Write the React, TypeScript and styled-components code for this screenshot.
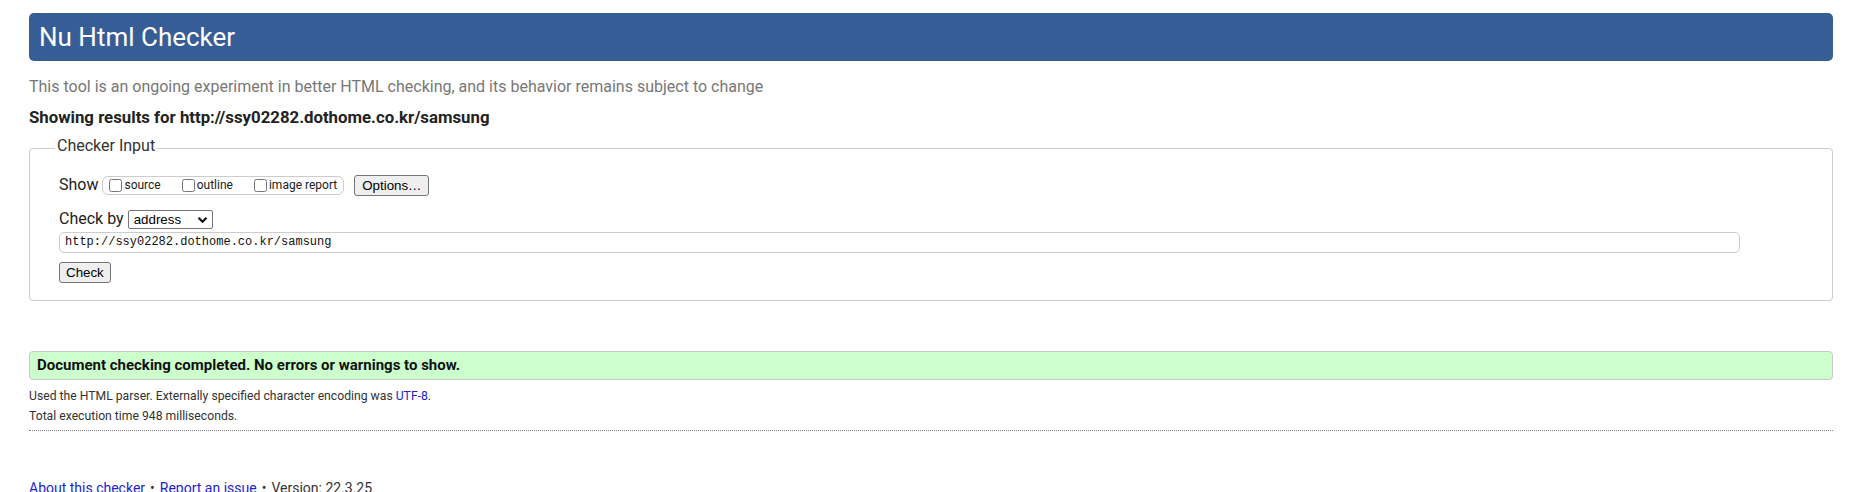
import * as React from 'react';
import styled, { createGlobalStyle } from 'styled-components';

const GlobalStyle = createGlobalStyle`
    body {
        margin: 0;
        background: #fff;
        color: #222;
        font-family: Roboto, "Liberation Sans", Arial, sans-serif;
    }
`;

const options = ['source', 'outline', 'image report'];

export default function App() {
    return (
        <>
            <GlobalStyle />
            <Page>
                <Header>Nu Html Checker</Header>
                <Intro>
                    This tool is an ongoing experiment in better HTML checking, and its behavior remains subject to change
                </Intro>
                <Results>Showing results for http://ssy02282.dothome.co.kr/samsung</Results>
                <form onSubmit={e => e.preventDefault()}>
                    <Fieldset>
                        <Legend>Checker Input</Legend>
                        <Row>
                            <Label>Show</Label>
                            <CheckGroup>
                                {options.map(name => (
                                    <CheckLabel key={name}>
                                        <input type="checkbox" />
                                        {name}
                                    </CheckLabel>
                                ))}
                            </CheckGroup>
                            <Button type="button" $pad={7}>Options…</Button>
                        </Row>
                        <Row $top={13} $align="baseline">
                            <Label>Check by</Label>
                            <SelectWrap>
                                <Select defaultValue="address">
                                    <option value="address">address</option>
                                    <option value="file">file upload</option>
                                    <option value="text">text input</option>
                                </Select>
                                <Chevron width="11" height="8" viewBox="0 0 11 8">
                                    <path d="M1.5 1.8 L5.5 5.8 L9.5 1.8" fill="none" stroke="#111" strokeWidth="2.2" />
                                </Chevron>
                            </SelectWrap>
                        </Row>
                        <Row $top={3}>
                            <UrlInput type="url" defaultValue="http://ssy02282.dothome.co.kr/samsung" />
                        </Row>
                        <Row $top={9}>
                            <Button type="submit" $pad={6}>Check</Button>
                        </Row>
                    </Fieldset>
                </form>
                <Success>Document checking completed. No errors or warnings to show.</Success>
                <Details>
                    <p>Used the HTML parser. Externally specified character encoding was <Link href="#">UTF-8</Link>.</p>
                    <p>Total execution time 948 milliseconds.</p>
                </Details>
                <Footer>
                    <Link href="#">About this checker</Link>
                    <Dot>•</Dot>
                    <Link href="#">Report an issue</Link>
                    <Dot>•</Dot>
                    Version: 22.3.25
                </Footer>
            </Page>
        </>
    );
}

const Page = styled.div`
    padding: 13px 22px 0 29px;
`;

const Header = styled.h1`
    margin: 0;
    height: 48px;
    padding-left: 10px;
    background: #365d95;
    border-radius: 5px;
    color: #fff;
    font-size: 26px;
    font-weight: 400;
    line-height: 48px;
`;

const Intro = styled.p`
    margin: 16px 0 0;
    color: #777;
    font-size: 16px;
    line-height: 20px;
`;

const Results = styled.p`
    margin: 10px 0 0;
    color: #222;
    font-size: 16.8px;
    font-weight: 700;
    line-height: 20px;
`;

const Fieldset = styled.fieldset`
    margin: 10px 0 0;
    padding: 15px 29px 17px 29px;
    border: 1px solid #ccc;
    border-radius: 4px;
    min-width: 0;
`;

const Legend = styled.legend`
    margin-left: -4px;
    padding: 0 2px 4px;
    color: #333;
    font-size: 16px;
    line-height: 18.75px;
`;

const Row = styled.div<{ $top?: number; $align?: string }>`
    display: flex;
    align-items: ${p => p.$align || 'center'};
    margin-top: ${p => p.$top || 0}px;
`;

const Label = styled.span`
    margin-right: 4px;
    color: #222;
    font-size: 16px;
    line-height: 20px;
`;

const CheckGroup = styled.span`
    display: inline-flex;
    align-items: center;
    gap: 17px;
    height: 19px;
    box-sizing: border-box;
    padding: 0 6px 0 2px;
    border: 1px solid #ccc;
    border-radius: 6px;
`;

const CheckLabel = styled.label`
    display: inline-flex;
    align-items: center;
    color: #222;
    font-size: 12px;

    input {
        width: 13px;
        height: 13px;
        margin: 0 2px 0 4px;
    }
`;

const Button = styled.button<{ $pad: number }>`
    height: 21px;
    margin-left: 10px;
    padding: 0 ${p => p.$pad}px;
    background: #efefef;
    border: 1px solid #767676;
    border-radius: 3px;
    color: #000;
    font-family: "Liberation Sans", Arial, sans-serif;
    font-size: 13.33px;

    &[type='submit'] {
        margin-left: 0;
    }
`;

const SelectWrap = styled.span`
    position: relative;
    display: inline-flex;
`;

const Select = styled.select`
    appearance: none;
    width: 85px;
    height: 19px;
    padding: 0 0 0 5px;
    background: #fff;
    border: 1px solid #767676;
    border-radius: 2px;
    color: #000;
    font-family: "Liberation Sans", Arial, sans-serif;
    font-size: 13.33px;
`;

const Chevron = styled.svg`
    position: absolute;
    right: 5px;
    top: 6px;
    pointer-events: none;
`;

const UrlInput = styled.input`
    width: calc(100% - 63px);
    height: 21px;
    box-sizing: border-box;
    padding: 0 5px;
    border: 1px solid #ccc;
    border-radius: 5px;
    color: #111;
    font-family: "Liberation Mono", "DejaVu Sans Mono", monospace;
    font-size: 12px;
`;

const Success = styled.div`
    margin-top: 50px;
    height: 29px;
    box-sizing: border-box;
    padding-left: 7px;
    background: #ccffcc;
    border: 1px solid #c8c8c8;
    border-radius: 4px;
    color: #111;
    font-size: 15px;
    font-weight: 700;
    line-height: 27px;
`;

const Details = styled.div`
    margin-top: 6px;
    padding-bottom: 4px;
    border-bottom: 1px dotted #888;
    color: #333;
    font-size: 12.2px;
    line-height: 20px;

    p {
        margin: 0;
    }
`;

const Footer = styled.p`
    margin: 47px 0 0;
    color: #333;
    font-size: 14px;
    line-height: 20px;
`;

const Dot = styled.span`
    margin: 0 5px;
`;

const Link = styled.a`
    color: #2222cc;
    text-decoration: none;
`;
